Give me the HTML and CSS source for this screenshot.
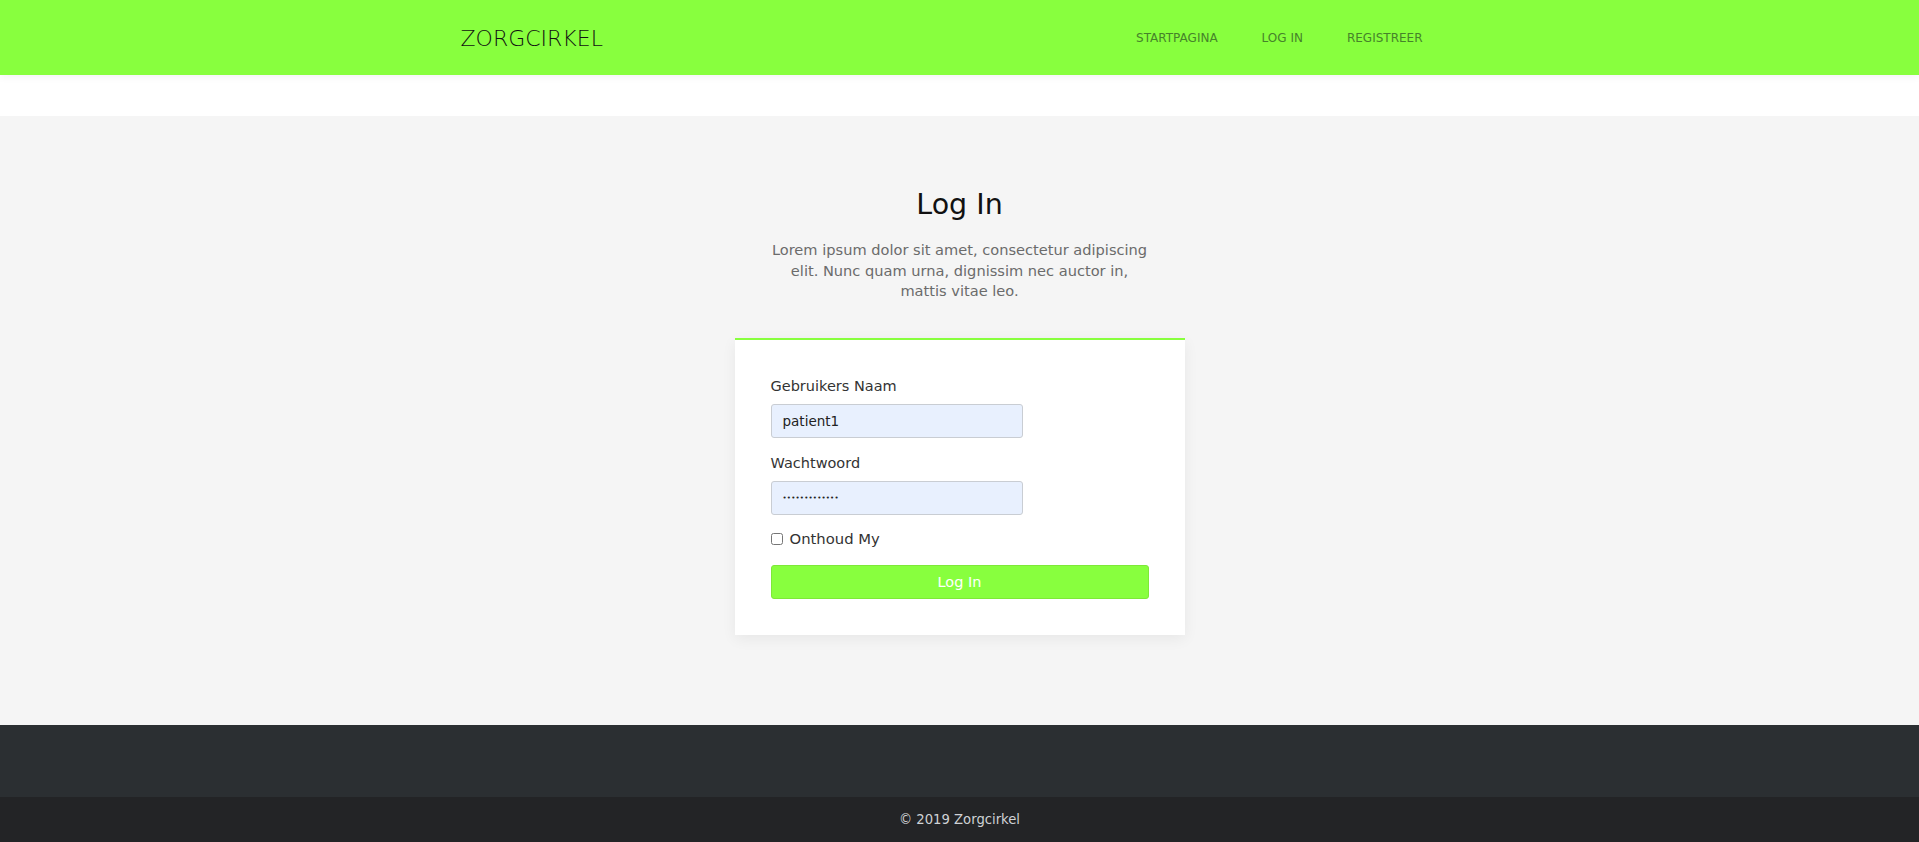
FILE: index.html
```html
<!DOCTYPE html>
<html lang="nl">
<head>
<meta charset="utf-8">
<title>Zorgcirkel - Log In</title>
<link rel="stylesheet" href="styles.css">
</head>
<body>
<header class="topbar">
  <div class="topbar-inner">
    <a class="brand" href="#">ZORGCIRKEL</a>
    <nav class="nav">
      <a class="nav-link" href="#">STARTPAGINA</a>
      <a class="nav-link" href="#">LOG IN</a>
      <a class="nav-link" href="#">REGISTREER</a>
    </nav>
  </div>
</header>
<div class="spacer"></div>
<main class="login-section">
  <h1 class="title">Log In</h1>
  <p class="lead">Lorem ipsum dolor sit amet, consectetur adipiscing elit. Nunc quam urna, dignissim nec auctor in, mattis vitae leo.</p>
  <form class="card">
    <label class="label" for="user">Gebruikers Naam</label>
    <input class="input" id="user" type="text" value="patient1">
    <label class="label label-gap" for="pass">Wachtwoord</label>
    <input class="input input-pass" id="pass" type="password" value="wachtwoord123">
    <label class="check">
      <input type="checkbox" class="checkbox">
      <span>Onthoud My</span>
    </label>
    <button type="button" class="btn">Log In</button>
  </form>
</main>
<footer>
  <div class="footer-top"></div>
  <div class="footer-bottom">© 2019 Zorgcirkel</div>
</footer>
</body>
</html>
```

FILE: styles.css
```css
* { box-sizing: border-box; }
html, body { margin: 0; padding: 0; }
body {
  font-family: "DejaVu Sans", "Noto Sans", sans-serif;
  color: #212529;
  background: #fff;
}
.topbar {
  height: 75px;
  background: #88ff3e;
  box-shadow: 0 2px 8px rgba(0,0,0,0.05);
  position: relative;
}
.topbar-inner {
  max-width: 998px;
  margin: 0 auto;
  height: 100%;
  display: flex;
  align-items: center;
  justify-content: space-between;
}
.brand {
  font-size: 22px;
  font-weight: 200;
  color: #111;
  text-decoration: none;
  margin-top: 1px;
}
.nav {
  display: flex;
  gap: 44px;
  padding-right: 36px;
}
.nav-link {
  font-size: 12px;
  color: #46832a;
  text-decoration: none;
  margin-top: 1px;
}
.spacer { height: 41px; }
.login-section {
  background: #f5f5f5;
  height: 609px;
  display: flex;
  flex-direction: column;
  align-items: center;
  padding-top: 71px;
}
.title {
  margin: 0;
  font-size: 28.5px;
  font-weight: 400;
  color: #111;
  line-height: 36px;
}
.lead {
  margin: 17px 0 0;
  width: 377px;
  text-align: center;
  font-size: 14.6px;
  line-height: 20.5px;
  color: #6b6b6b;
}
.card {
  margin-top: 36px;
  width: 450px;
  background: #fff;
  border-top: 2px solid #88ff3e;
  box-shadow: 0 4px 14px rgba(0,0,0,0.06);
  padding: 36px 36px 36px;
  display: flex;
  flex-direction: column;
  align-items: flex-start;
}
.label {
  font-size: 14.5px;
  line-height: 20px;
  color: #333;
  margin-bottom: 8px;
}
.label-gap { margin-top: 15px; }
.input {
  width: 252px;
  height: 34px;
  border: 1px solid #c9cdd3;
  border-radius: 3px;
  background: #e8f0fe;
  padding: 0 11px;
  font-family: inherit;
  font-size: 13.5px;
  color: #222;
}
.input-pass {
  font-size: 7px;
  letter-spacing: 0.2px;
}
.check {
  display: flex;
  align-items: center;
  gap: 7px;
  font-size: 14.8px;
  line-height: 20px;
  color: #333;
  margin-top: 14px;
}
.checkbox {
  margin: 0;
  width: 12px;
  height: 12px;
}
.btn {
  margin-top: 16px;
  width: 378px;
  height: 34px;
  border: 1px solid #7ee838;
  border-radius: 3px;
  background: #88ff3e;
  color: #fff;
  font-family: inherit;
  font-size: 14.5px;
}
.footer-top {
  height: 72px;
  background: #2b2f32;
}
.footer-bottom {
  height: 45px;
  background: #232426;
  color: #cfd2d5;
  font-size: 13.2px;
  display: flex;
  align-items: center;
  justify-content: center;
}
```
